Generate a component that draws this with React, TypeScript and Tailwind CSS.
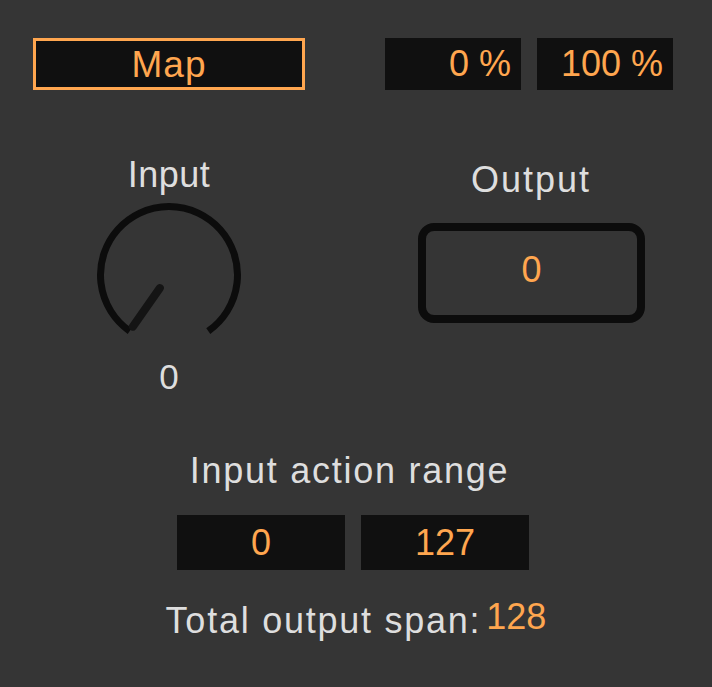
const orange = "text-[#ffa64f]";

function ValueBox({ value, className }: { value: string; className: string }) {
    return (
        <div className={`flex items-center bg-[#101010] ${orange} text-[36px] leading-none ${className}`}>
            {value}
        </div>
    );
}

function Knob() {
    // arc opens at the bottom, from 215deg to 145deg (clockwise from top)
    const cx = 75;
    const cy = 75;
    const r = 68.5;
    const pt = (deg: number, rad: number) => {
        const a = (deg * Math.PI) / 180;
        return [cx + rad * Math.sin(a), cy - rad * Math.cos(a)];
    };
    const [sx, sy] = pt(215, r);
    const [ex, ey] = pt(145, r);
    const [n1x, n1y] = pt(215, 16);
    const [n2x, n2y] = pt(215, 63);
    return (
        <svg width="150" height="150" viewBox="0 0 150 150" className="block">
            <path
                d={`M ${sx} ${sy} A ${r} ${r} 0 1 1 ${ex} ${ey}`}
                fill="none"
                stroke="#0c0c0c"
                strokeWidth="7"
            />
            <line x1={n1x} y1={n1y} x2={n2x} y2={n2y} stroke="#141414" strokeWidth="8" strokeLinecap="round" />
        </svg>
    );
}

export default function App() {
    return (
        <div className="w-[712px] h-[687px] bg-[#353535] text-[#dedede] font-['Liberation_Sans',Arial,sans-serif] overflow-hidden">
            <div className="flex justify-between pt-[38px] pl-[33px] pr-[39px]">
                <div className={`w-[272px] h-[52px] border-[3px] border-[#ffa64f] bg-[#101010] flex items-center justify-center ${orange} text-[37px] leading-none tracking-[1px]`}>
                    Map
                </div>
                <div className="flex gap-4">
                    <ValueBox value="0 %" className="w-[136px] h-[52px] justify-end pr-[10px]" />
                    <ValueBox value="100 %" className="w-[136px] h-[52px] justify-end pr-[10px]" />
                </div>
            </div>

            <div className="flex items-start mt-[67px] pl-[49px]">
                <div className="w-[240px] flex flex-col items-center">
                    <div className="text-[36px] leading-none tracking-[0.5px]">Input</div>
                    <div className="mt-[7px]">
                        <Knob />
                    </div>
                    <div className="mt-[9px] text-[35px] leading-none">0</div>
                </div>
                <div className="ml-[122px] mt-[5px] w-[240px] flex flex-col items-center">
                    <div className="text-[36px] leading-none tracking-[2px]">Output</div>
                    <div className="mt-[25px] ml-[1px] w-[227px] h-[100px] border-[8px] border-[#0c0c0c] rounded-[16px] flex items-center justify-center">
                        <span className={`${orange} text-[36px] leading-none -mt-[6px]`}>0</span>
                    </div>
                </div>
            </div>

            <div className="mt-[59px] flex flex-col items-center">
                <div className="w-full text-center pr-[13px] text-[36px] leading-none tracking-[1.75px]">Input action range</div>
                <div className="mt-[26px] flex justify-center gap-4 pr-[6px]">
                    <ValueBox value="0" className="w-[168px] h-[55px] justify-center" />
                    <ValueBox value="127" className="w-[168px] h-[55px] justify-center" />
                </div>
                <div className="mt-[29px] flex items-start">
                    <span className="mt-[4px] text-[36px] leading-none tracking-[1.75px]">Total output span:</span>
                    <span className={`ml-[5px] ${orange} text-[36px] leading-none`}>128</span>
                </div>
            </div>
        </div>
    );
}
